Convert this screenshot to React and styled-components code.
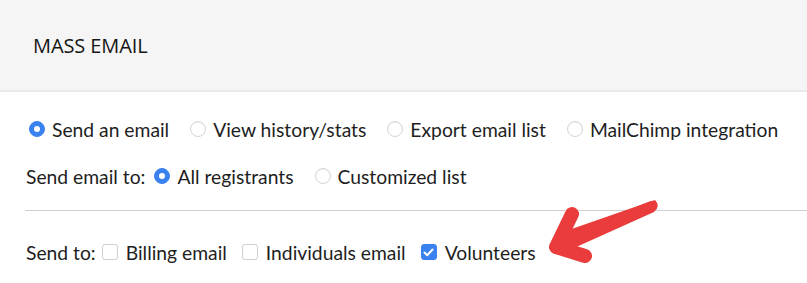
import React from "react";
import styled, { createGlobalStyle } from "styled-components";

const Global = createGlobalStyle`
  html, body { margin: 0; padding: 0; background: #fff; }
  body { font-family: "Lato", "Liberation Sans", sans-serif; color: #1e1e1e; }
`;

const Page = styled.div`
  position: relative;
  width: 807px;
  height: 283px;
  overflow: hidden;
  background: #fff;
`;

const Header = styled.div`
  height: 90px;
  display: flex;
  align-items: center;
  padding-left: 33px;
  background: #f5f5f5;
  border-bottom: 2px solid #e9e9e9;
  font-family: "Open Sans", sans-serif;
  font-size: 20px;
  letter-spacing: -0.1px;
  color: #151515;
`;

const Content = styled.div`
  padding-left: 26px;
  font-size: 19.3px;
`;

const Row = styled.div`
  height: 26px;
  display: flex;
  align-items: center;
  margin-top: ${(p) => p.$top}px;
  white-space: nowrap;
`;

const Label = styled.span`
  margin-right: ${(p) => p.$gap}px;
`;

const Option = styled.label`
  display: flex;
  align-items: center;
  gap: ${(p) => p.$inner}px;
  margin-left: ${(p) => p.$left || 0}px;
  margin-right: ${(p) => p.$gap}px;
`;

const Radio = styled.span`
  box-sizing: border-box;
  width: 16px;
  height: 16px;
  border-radius: 50%;
  display: flex;
  align-items: center;
  justify-content: center;
  background: ${(p) => (p.$on ? "#3a82f0" : "#fff")};
  border: 1px solid ${(p) => (p.$on ? "#3a82f0" : "#d4d4d4")};
  box-shadow: ${(p) => (p.$on ? "none" : "inset 0 1px 1px rgba(0,0,0,0.06)")};
  &::after {
    content: "";
    display: ${(p) => (p.$on ? "block" : "none")};
    width: 6px;
    height: 6px;
    border-radius: 50%;
    background: #fff;
  }
`;

const Check = styled.span`
  box-sizing: border-box;
  width: 16px;
  height: 16px;
  border-radius: 3px;
  display: flex;
  align-items: center;
  justify-content: center;
  background: ${(p) => (p.$on ? "#3a82f0" : "#fff")};
  border: 1px solid ${(p) => (p.$on ? "#3a82f0" : "#d0d0d0")};
`;

const Divider = styled.div`
  height: 1px;
  background: #cfcfcf;
  margin: 21px 0 0 -1px;
`;

const Arrow = styled.svg`
  position: absolute;
  left: 0;
  top: 0;
  pointer-events: none;
`;

function RadioOpt({ on, children, gap, left }) {
  return (
    <Option $inner={7} $gap={gap} $left={left}>
      <Radio $on={on} />
      <span>{children}</span>
    </Option>
  );
}

function CheckOpt({ on, children, gap }) {
  return (
    <Option $inner={8} $gap={gap}>
      <Check $on={on}>
        {on && (
          <svg width="11" height="9" viewBox="0 0 11 9">
            <path d="M1.5 4.5 L4.2 7.2 L9.5 1.5" fill="none" stroke="#fff" strokeWidth="2" strokeLinecap="round" strokeLinejoin="round" />
          </svg>
        )}
      </Check>
      <span>{children}</span>
    </Option>
  );
}

export default function App() {
  return (
    <Page>
      <Global />
      <Header>MASS EMAIL</Header>
      <Content>
        <Row $top={24}>
          <RadioOpt on left={3} gap={21}>Send an email</RadioOpt>
          <RadioOpt gap={21}>View history/stats</RadioOpt>
          <RadioOpt gap={21}>Export email list</RadioOpt>
          <RadioOpt gap={0}>MailChimp integration</RadioOpt>
        </Row>
        <Row $top={21}>
          <Label $gap={9}>Send email to:</Label>
          <RadioOpt on gap={21}>All registrants</RadioOpt>
          <RadioOpt gap={0}>Customized list</RadioOpt>
        </Row>
        <Divider />
        <Row $top={28}>
          <Label $gap={6}>Send to:</Label>
          <CheckOpt gap={15}>Billing email</CheckOpt>
          <CheckOpt gap={15}>Individuals email</CheckOpt>
          <CheckOpt on gap={0}>Volunteers</CheckOpt>
        </Row>
      </Content>
      <Arrow width="807" height="283" viewBox="0 0 807 283">
        <path d="M655 200 Q661 206 654 212 L574 248 L560 233 Z" fill="#ea3c3c" />
        <polyline points="572,214 556,247 585,256" fill="none" stroke="#ea3c3c" strokeWidth="14" strokeLinecap="round" strokeLinejoin="round" />
        <line x1="566" y1="240" x2="652" y2="206" stroke="#ea3c3c" strokeWidth="10" strokeLinecap="round" />
      </Arrow>
    </Page>
  );
}
